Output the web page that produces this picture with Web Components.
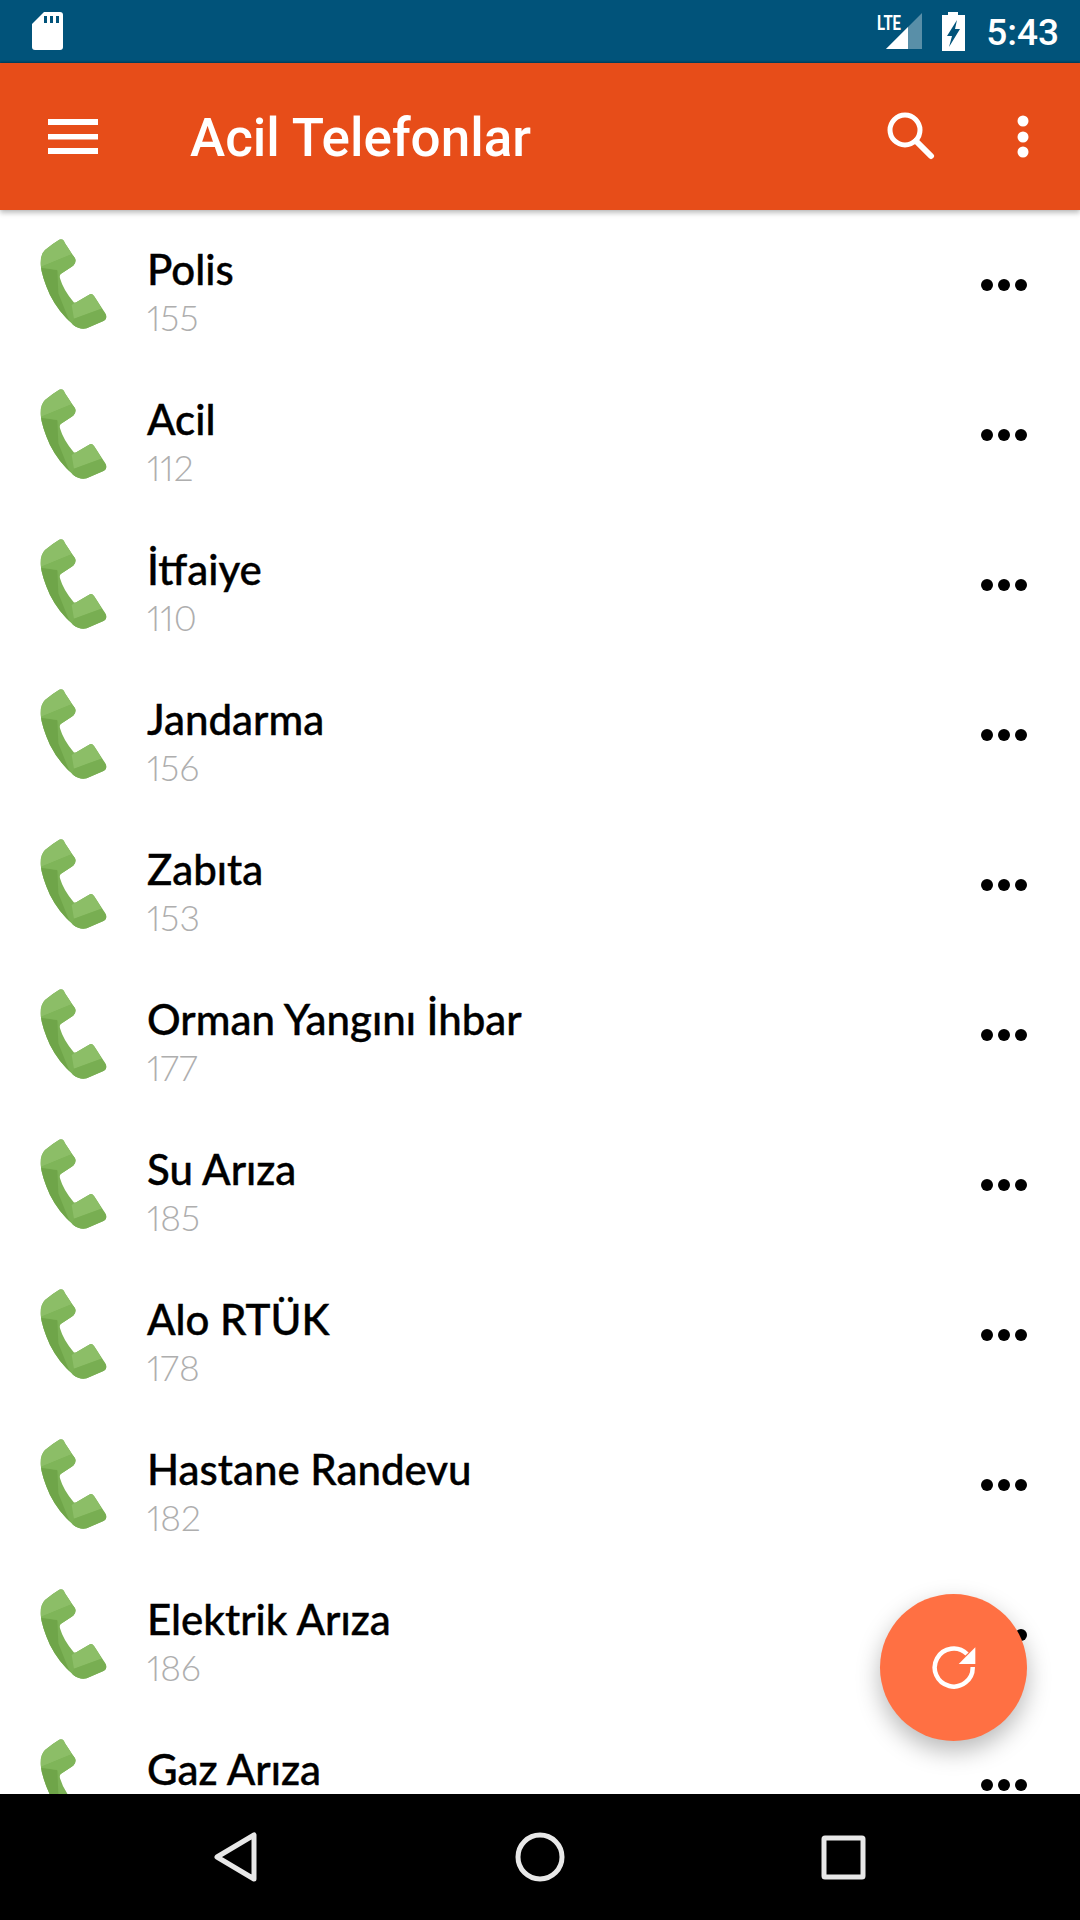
<!DOCTYPE html>
<html lang="tr">
<head>
<meta charset="utf-8">
<title>Acil Telefonlar</title>
<style>
   html, body { margin: 0; padding: 0; background: #fff; }
   body { width: 1080px; height: 1920px; overflow: hidden; font-family: "Lato", "Liberation Sans", sans-serif; }
</style>
</head>
<body>
<app-shell>
   <status-bar slot="status"></status-bar>
   <app-toolbar slot="toolbar">Acil Telefonlar</app-toolbar>
   <contact-list slot="content">
      <contact-row><span slot="name">Polis</span><span slot="number">155</span></contact-row>
      <contact-row><span slot="name">Acil</span><span slot="number">112</span></contact-row>
      <contact-row><span slot="name">İtfaiye</span><span slot="number">110</span></contact-row>
      <contact-row><span slot="name">Jandarma</span><span slot="number">156</span></contact-row>
      <contact-row><span slot="name">Zabıta</span><span slot="number">153</span></contact-row>
      <contact-row><span slot="name">Orman Yangını İhbar</span><span slot="number">177</span></contact-row>
      <contact-row><span slot="name">Su Arıza</span><span slot="number">185</span></contact-row>
      <contact-row><span slot="name">Alo RTÜK</span><span slot="number">178</span></contact-row>
      <contact-row><span slot="name">Hastane Randevu</span><span slot="number">182</span></contact-row>
      <contact-row><span slot="name">Elektrik Arıza</span><span slot="number">186</span></contact-row>
      <contact-row><span slot="name">Gaz Arıza</span><span slot="number">187</span></contact-row>
   </contact-list>
   <refresh-fab slot="content"></refresh-fab>
   <nav-bar slot="nav"></nav-bar>
</app-shell>

<script>
   // base: cada componente solo define getMarkup y getStyles
   class BaseElement extends HTMLElement {
      constructor() {
         super()
         this.attachShadow({ mode: 'open' })
      }
      getTemplate() {
         const template = document.createElement('template')
         template.innerHTML = `<style>${this.getStyles()}</style>${this.getMarkup()}`
         return template
      }
      connectedCallback() {
         this.shadowRoot.appendChild(this.getTemplate().content.cloneNode(true))
      }
   }

   class AppShell extends BaseElement {
      getStyles() {
         return `
            :host { display: flex; flex-direction: column; width: 1080px; height: 1920px; }
            main { position: relative; height: 1584px; overflow: hidden; background: #fff; }
         `
      }
      getMarkup() {
         return `
            <slot name="status"></slot>
            <slot name="toolbar"></slot>
            <main><slot name="content"></slot></main>
            <slot name="nav"></slot>
         `
      }
   }

   class StatusBar extends BaseElement {
      getStyles() {
         return `
            :host { display: flex; align-items: flex-start; height: 63px; background: #01537a; color: #fff; box-sizing: border-box; padding: 12px 21px 0 32px; }
            .sd { width: 31px; height: 38px; }
            .spacer { flex: 1; }
            .signal { width: 50px; height: 38px; margin-right: 19px; }
            .lte { font: 700 21px "Roboto", sans-serif; }
            .battery { width: 25px; height: 39px; margin-right: 20px; }
            .time { font: 500 37px/42px "Roboto", sans-serif; }
         `
      }
      getMarkup() {
         return `
            <svg class="sd" viewBox="0 0 31 38">
               <path fill="#fff" d="M12 0H28a3 3 0 0 1 3 3V35a3 3 0 0 1-3 3H3a3 3 0 0 1-3-3V12Z"/>
               <path fill="#01537a" d="M12 4h3v7h-3zM18 4h3v7h-3zM24 4h3v7h-3z"/>
            </svg>
            <div class="spacer"></div>
            <svg class="signal" viewBox="0 0 50 38">
               <path fill="#fff" fill-opacity=".35" d="M14 37 50 1V37Z"/>
               <path fill="#fff" d="M14 37 36 15V37Z"/>
               <text class="lte" x="5" y="18" fill="#fff" textLength="24" lengthAdjust="spacingAndGlyphs">LTE</text>
            </svg>
            <svg class="battery" viewBox="0 0 25 39">
               <path fill="#fff" d="M7 0H17V3H24V39H1V3H7Z"/>
               <path fill="#01537a" d="M16 8 6 24H11L8 35 19 17H14Z"/>
            </svg>
            <span class="time">5:43</span>
         `
      }
   }

   class AppToolbar extends BaseElement {
      getStyles() {
         return `
            :host { display: flex; align-items: center; position: relative; z-index: 2; height: 147px; background: #e74d19; color: #fff; box-sizing: border-box; padding-left: 48px; box-shadow: 0 -1px 2px rgba(0,0,0,.35), 0 3px 5px rgba(0,0,0,.25); }
            .menu { width: 50px; height: 36px; margin-right: 92px; }
            .title { flex: 1; font: 500 53px/60px "Roboto", sans-serif; margin-top: 2px; }
            .search { width: 48px; height: 48px; margin: 0 81px 2px 0; }
            .more { width: 14px; height: 46px; margin-right: 50px; }
         `
      }
      getMarkup() {
         return `
            <svg class="menu" viewBox="0 0 50 36"><path fill="#fff" d="M0 0h50v6H0zM0 15h50v5.5H0zM0 29h50v6H0z"/></svg>
            <div class="title"><slot></slot></div>
            <svg class="search" viewBox="0 0 48 48" fill="none" stroke="#fff">
               <circle cx="18" cy="18" r="15" stroke-width="5"/>
               <path d="M29 29 44 44" stroke-width="6" stroke-linecap="round"/>
            </svg>
            <svg class="more" viewBox="0 0 14 46"><g fill="#fff"><circle cx="7" cy="7" r="5.5"/><circle cx="7" cy="23" r="5.5"/><circle cx="7" cy="38" r="5.5"/></g></svg>
         `
      }
   }

   class ContactList extends BaseElement {
      getStyles() { return `:host { display: block; }` }
      getMarkup() { return `<slot></slot>` }
   }

   class ContactRow extends BaseElement {
      getStyles() {
         return `
            :host { display: flex; height: 150px; box-sizing: border-box; padding-left: 30px; }
            .phone { width: 90px; height: 110px; margin-top: 20px; flex: none; }
            .text { flex: 1; margin-left: 27px; padding-top: 34px; }
            .name { font: 500 42px/50px "Lato", sans-serif; color: #000; -webkit-text-stroke: .4px #000; }
            .number { font: 300 35.5px/44px "Lato", sans-serif; font-variant-numeric: proportional-nums; color: #aeaeae; margin-top: 2px; }
            .dots { width: 46px; height: 12px; margin: 69px 53px 0 0; flex: none; }
         `
      }
      getMarkup() {
         return `
            <svg class="phone" viewBox="0 0 270 330">
               <defs><clipPath id="body"><path d="M95 28Q100 28 105 40L135 85Q140 95 130 107L92 132Q88 136 90 145Q100 180 130 215Q133 220 140 216L180 193Q186 190 192 198L226 250Q234 265 222 272L170 295Q150 300 130 285Q85 245 60 195Q35 140 32 105Q30 75 45 60Q70 40 90 28Z"/></clipPath></defs>
               <g clip-path="url(#body)">
                  <rect width="270" height="330" fill="#7cb256"/>
                  <path fill="#6fa549" d="M20 112 82 120 85 190 125 290 120 310 20 200Z"/>
                  <path fill="#8cbe67" d="M100 10 125 73 30 112 10 60Z"/>
                  <path fill="#7fb559" d="M125 73 150 90 90 140 82 120 30 112Z"/>
                  <path fill="#8cbe67" d="M190 180 214 236 132 266 125 225Z"/>
                  <path fill="#78ae52" d="M214 236 240 270 150 310 125 285 132 266Z"/>
               </g>
            </svg>
            <div class="text">
               <div class="name"><slot name="name"></slot></div>
               <div class="number"><slot name="number"></slot></div>
            </div>
            <svg class="dots" viewBox="0 0 46 12"><g fill="#000"><circle cx="6" cy="6" r="6"/><circle cx="23" cy="6" r="6"/><circle cx="40" cy="6" r="6"/></g></svg>
         `
      }
   }

   // el FAB si va encima de la lista
   class RefreshFab extends BaseElement {
      getStyles() {
         return `
            :host { position: absolute; left: 880px; top: 1384px; width: 147px; height: 147px; border-radius: 50%; background: #ff7043; display: flex; align-items: center; justify-content: center; box-shadow: 0 10px 24px rgba(0,0,0,.28); }
            svg { width: 44px; height: 44px; }
         `
      }
      getMarkup() {
         return `
            <svg viewBox="0 0 44 44">
               <path fill="none" stroke="#fff" stroke-width="4.5" d="M35 8A19 19 0 1 0 40.7 21"/>
               <path fill="#fff" d="M43.3 1.3V18H26.7Z"/>
            </svg>
         `
      }
   }

   class NavBar extends BaseElement {
      getStyles() {
         return `
            :host { display: flex; align-items: center; height: 126px; background: #000; box-sizing: border-box; padding-left: 214px; }
            svg { display: block; }
            .back { width: 43px; height: 50px; margin-right: 258px; }
            .home { width: 50px; height: 50px; margin-right: 256px; }
            .recent { width: 45px; height: 45px; }
         `
      }
      getMarkup() {
         return `
            <svg class="back" viewBox="0 0 43 50" fill="none" stroke="#e8e8e8" stroke-width="5" stroke-linejoin="round"><path d="M40 3V47L3 25Z"/></svg>
            <svg class="home" viewBox="0 0 50 50" fill="none" stroke="#e8e8e8" stroke-width="5"><circle cx="25" cy="25" r="22"/></svg>
            <svg class="recent" viewBox="0 0 45 45" fill="none" stroke="#e8e8e8" stroke-width="5" stroke-linejoin="round"><rect x="3" y="3" width="39" height="39" rx="1"/></svg>
         `
      }
   }

   customElements.define('app-shell', AppShell)
   customElements.define('status-bar', StatusBar)
   customElements.define('app-toolbar', AppToolbar)
   customElements.define('contact-list', ContactList)
   customElements.define('contact-row', ContactRow)
   customElements.define('refresh-fab', RefreshFab)
   customElements.define('nav-bar', NavBar)
</script>
</body>
</html>
